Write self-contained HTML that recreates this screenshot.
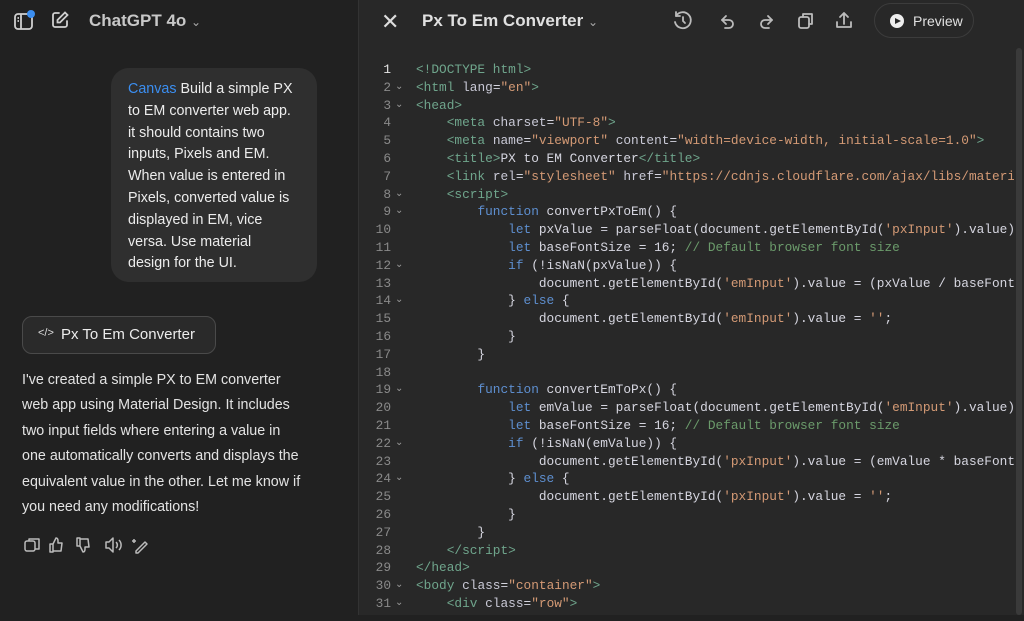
<!DOCTYPE html>
<html><head><meta charset="utf-8"><style>
*{margin:0;padding:0;box-sizing:border-box}
body{width:1024px;height:615px;overflow:hidden;background:#212121;font-family:"Liberation Sans",sans-serif;color:#ececec;position:relative}
.left{position:absolute;left:0;top:0;width:358px;height:615px;background:#212121}
.right{position:absolute;left:358px;top:0;width:666px;height:615px;background:#282828;border-left:1px solid #333}
.abs{position:absolute}
.bubble{position:absolute;left:111px;top:68px;width:206px;height:214px;background:#2f2f2f;border-radius:18px;padding:11px 17px;font-size:14.3px;line-height:21.8px;color:#ececec;white-space:nowrap}
.chip{position:absolute;left:22px;top:316px;width:194px;height:38px;border:1px solid #4a4a4a;border-radius:10px;background:#2a2a2a;font-size:15px;color:#ececec;padding:9px 0 0 38px}
.msg{position:absolute;left:22px;top:368px;width:320px;font-size:14.3px;line-height:25.4px;color:#e3e3e3;white-space:nowrap}
.code{position:absolute;left:0;top:61px;font-family:"Liberation Mono",monospace;font-size:12.8px;line-height:17.8px;white-space:pre;color:#d6d6e0}
.ln{position:absolute;left:8px;width:24px;text-align:right;color:#8a8a8a;font-family:"Liberation Mono",monospace}
.cv{position:absolute;left:36px;color:#9a9a9a;font-size:10px}
.t{color:#6fa58c}.a{color:#c9c9d6}.s{color:#d49a75}.k{color:#5e8fd0}.c{color:#6b9b6b}
svg{position:absolute}
</style></head><body>
<div class="left">
<svg style="left:13px;top:10px" width="22" height="22" viewBox="0 0 22 22" fill="none" stroke="#cfcfcf" stroke-width="1.8"><rect x="2" y="4" width="17" height="15" rx="3"/><line x1="8" y1="4" x2="8" y2="19"/><line x1="4.5" y1="8" x2="6" y2="8"/><line x1="4.5" y1="11" x2="6" y2="11"/></svg>
<div class="abs" style="left:27px;top:10px;width:8px;height:8px;border-radius:50%;background:#3b8ef0"></div>
<svg style="left:50px;top:10px" width="20" height="20" viewBox="0 0 20 20" fill="none" stroke="#cfcfcf" stroke-width="1.8" stroke-linecap="round"><path d="M9 3H5a2 2 0 0 0-2 2v10a2 2 0 0 0 2 2h10a2 2 0 0 0 2-2v-4"/><path d="M15 2.5l2.5 2.5-7.5 7.5H7.5V10z"/></svg>
<div class="abs" style="left:89px;top:11px;font-size:17px;font-weight:bold;color:#c8c8c8">ChatGPT 4o <span style="font-size:12px;font-weight:normal;color:#aaa">⌄</span></div>
<div class="bubble"><span style="color:#3b8ef0">Canvas</span> Build a simple PX<br>to EM converter web app.<br>it should contains two<br>inputs, Pixels and EM.<br>When value is entered in<br>Pixels, converted value is<br>displayed in EM, vice<br>versa. Use material<br>design for the UI.</div>
<div class="chip"><span class="abs" style="left:15px;top:10px;font-size:11px;color:#ddd">&lt;/&gt;</span>Px To Em Converter</div>
<div class="msg">I've created a simple PX to EM converter<br>web app using Material Design. It includes<br>two input fields where entering a value in<br>one automatically converts and displays the<br>equivalent value in the other. Let me know if<br>you need any modifications!</div>
<svg style="left:24px;top:536px" width="130" height="18" viewBox="0 0 130 18" fill="none" stroke="#bbb" stroke-width="1.5" stroke-linejoin="round"><rect x="1" y="5" width="10" height="10" rx="2"/><path d="M5 5V3h10v10h-4"/><path d="M29 8l3-6c2 0 2 2 2 3v2h4l-1 8h-8zM26 8h3v8h-3z"/><path d="M56 10l3 6c2 0 2-2 2-3v-2h4l-1-8h-8zM53 10h3V2h-3z"/><path d="M82 6h3l4-4v14l-4-4h-3z"/><path d="M92 6a4 4 0 0 1 0 6M95 4a7 7 0 0 1 0 10"/><path d="M112 15l9-9 2 2-9 9h-2zM110 3v4M108 5h4"/></svg>
</div>
<div class="right">
<div class="abs" style="left:22px;top:9px;font-size:22px;color:#ddd;font-weight:300">✕</div>
<div class="abs" style="left:63px;top:11px;font-size:17px;font-weight:bold;color:#e0e0e0">Px To Em Converter <span style="font-size:12px;font-weight:normal;color:#aaa">⌄</span></div>
<svg style="left:313px;top:10px" width="200" height="22" viewBox="0 0 200 22" fill="none" stroke="#bbb" stroke-width="1.8" stroke-linecap="round" stroke-linejoin="round"><path d="M4 6a8 8 0 1 1-1 6"/><path d="M4 2v4h4"/><path d="M11 7v4l2 2"/><path d="M50 10h7a4 4 0 0 1 0 8h-4"/><path d="M50 10l4-4M50 10l4 4"/><path d="M100 10h-7a4 4 0 0 0 0 8h4"/><path d="M100 10l-4-4M100 10l-4 4"/><rect x="127" y="7" width="10" height="11" rx="2"/><path d="M131 7V4h9v10h-3"/><path d="M172 3v11M168 7l4-4 4 4M165 12v5h14v-5"/></svg>
<div class="abs" style="left:515px;top:3px;width:100px;height:35px;border:1px solid #3c3c3c;border-radius:18px;font-size:14px;color:#e0e0e0;padding:9px 0 0 38px"><span class="abs" style="left:15px;top:10px;width:14px;height:14px;border-radius:50%;background:#eee"></span><span class="abs" style="left:20px;top:13.5px;width:0;height:0;border-left:6px solid #282828;border-top:3.5px solid transparent;border-bottom:3.5px solid transparent"></span>Preview</div>
<div class="abs" style="left:657px;top:48px;width:6px;height:567px;background:#3a3a3a;border-radius:3px"></div>
<div class="code" style="width:655px;overflow:hidden;height:560px">
<div style="position:absolute;left:0;top:0">
<div class="ln" style="top:0;color:#e6e6e6">1</div><div class="ln" style="top:17.8px">2</div><div class="ln" style="top:35.6px">3</div><div class="ln" style="top:53.4px">4</div><div class="ln" style="top:71.2px">5</div><div class="ln" style="top:89px">6</div><div class="ln" style="top:106.8px">7</div><div class="ln" style="top:124.6px">8</div><div class="ln" style="top:142.4px">9</div><div class="ln" style="top:160.2px">10</div><div class="ln" style="top:178px">11</div><div class="ln" style="top:195.8px">12</div><div class="ln" style="top:213.6px">13</div><div class="ln" style="top:231.4px">14</div><div class="ln" style="top:249.2px">15</div><div class="ln" style="top:267px">16</div><div class="ln" style="top:284.8px">17</div><div class="ln" style="top:302.6px">18</div><div class="ln" style="top:320.4px">19</div><div class="ln" style="top:338.2px">20</div><div class="ln" style="top:356px">21</div><div class="ln" style="top:373.8px">22</div><div class="ln" style="top:391.6px">23</div><div class="ln" style="top:409.4px">24</div><div class="ln" style="top:427.2px">25</div><div class="ln" style="top:445px">26</div><div class="ln" style="top:462.8px">27</div><div class="ln" style="top:480.6px">28</div><div class="ln" style="top:498.4px">29</div><div class="ln" style="top:516.2px">30</div><div class="ln" style="top:534px">31</div>
<div class="cv" style="top:17.8px">⌄</div><div class="cv" style="top:35.6px">⌄</div><div class="cv" style="top:124.6px">⌄</div><div class="cv" style="top:142.4px">⌄</div><div class="cv" style="top:195.8px">⌄</div><div class="cv" style="top:231.4px">⌄</div><div class="cv" style="top:320.4px">⌄</div><div class="cv" style="top:373.8px">⌄</div><div class="cv" style="top:409.4px">⌄</div><div class="cv" style="top:516.2px">⌄</div><div class="cv" style="top:534px">⌄</div>
</div>
<div style="position:absolute;left:57px;top:0"><span class="t">&lt;!DOCTYPE html&gt;</span>
<span class="t">&lt;html</span> <span class="a">lang</span>=<span class="s">"en"</span><span class="t">&gt;</span>
<span class="t">&lt;head&gt;</span>
    <span class="t">&lt;meta</span> <span class="a">charset</span>=<span class="s">"UTF-8"</span><span class="t">&gt;</span>
    <span class="t">&lt;meta</span> <span class="a">name</span>=<span class="s">"viewport"</span> <span class="a">content</span>=<span class="s">"width=device-width, initial-scale=1.0"</span><span class="t">&gt;</span>
    <span class="t">&lt;title&gt;</span>PX to EM Converter<span class="t">&lt;/title&gt;</span>
    <span class="t">&lt;link</span> <span class="a">rel</span>=<span class="s">"stylesheet"</span> <span class="a">href</span>=<span class="s">"https://cdnjs.cloudflare.com/ajax/libs/materi</span>
    <span class="t">&lt;script&gt;</span>
        <span class="k">function</span> convertPxToEm() {
            <span class="k">let</span> pxValue = parseFloat(document.getElementById(<span class="s">'pxInput'</span>).value)
            <span class="k">let</span> baseFontSize = 16; <span class="c">// Default browser font size</span>
            <span class="k">if</span> (!isNaN(pxValue)) {
                document.getElementById(<span class="s">'emInput'</span>).value = (pxValue / baseFont
            } <span class="k">else</span> {
                document.getElementById(<span class="s">'emInput'</span>).value = <span class="s">''</span>;
            }
        }

        <span class="k">function</span> convertEmToPx() {
            <span class="k">let</span> emValue = parseFloat(document.getElementById(<span class="s">'emInput'</span>).value)
            <span class="k">let</span> baseFontSize = 16; <span class="c">// Default browser font size</span>
            <span class="k">if</span> (!isNaN(emValue)) {
                document.getElementById(<span class="s">'pxInput'</span>).value = (emValue * baseFont
            } <span class="k">else</span> {
                document.getElementById(<span class="s">'pxInput'</span>).value = <span class="s">''</span>;
            }
        }
    <span class="t">&lt;/script&gt;</span>
<span class="t">&lt;/head&gt;</span>
<span class="t">&lt;body</span> <span class="a">class</span>=<span class="s">"container"</span><span class="t">&gt;</span>
    <span class="t">&lt;div</span> <span class="a">class</span>=<span class="s">"row"</span><span class="t">&gt;</span></div>
</div>
</div>
</body></html>
